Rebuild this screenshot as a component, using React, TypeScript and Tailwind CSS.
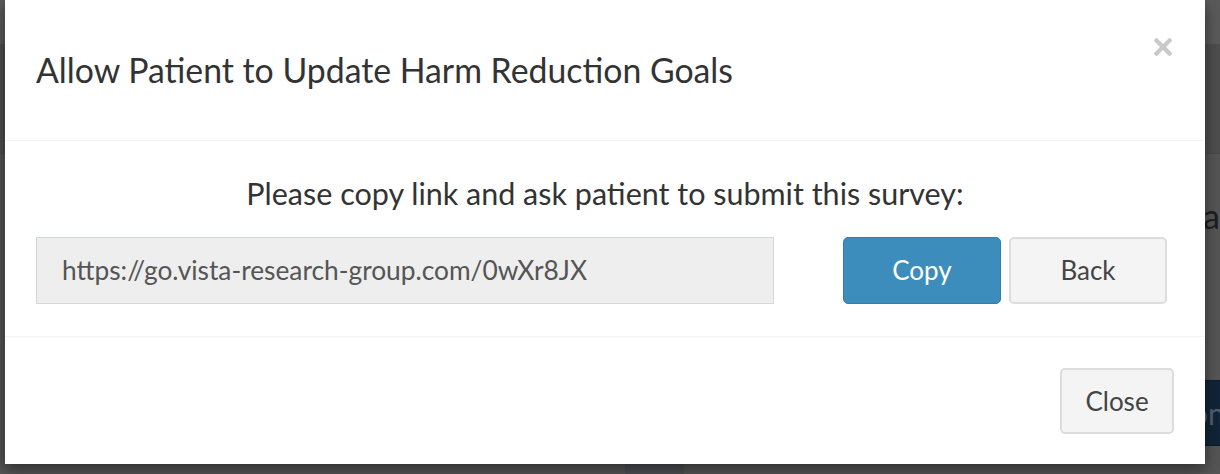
import React from "react";

export default function App() {
  const font = { fontFamily: "Lato, 'Open Sans', sans-serif" };
  return (
    <div
      className="relative w-[1220px] h-[474px] overflow-hidden bg-[#565656]"
      style={font}
    >
      {/* dimmed page behind the modal */}
      <div className="absolute left-0 top-0 w-[1220px] h-[44px] bg-[#5b5b5b]" />
      <div className="absolute left-0 top-[44px] w-[1220px] h-[109px] bg-[#4f4f4f]" />
      <div className="absolute left-0 top-[153px] w-[1220px] h-[1px] bg-[#4a4a4a]" />
      <div className="absolute left-[1203px] top-[196px] text-[34px] leading-[40px] text-[#1e1e1e]">
        ar
      </div>
      <div className="absolute left-[-14px] top-[276px] text-[34px] leading-[40px] text-[#1e1e1e]">
        r
      </div>
      <div className="absolute left-[1150px] top-[380px] w-[120px] h-[66px] bg-[#112538] border border-[#0b1a28] flex items-center pl-[40px] text-[30px] text-[#556070]">
        on
      </div>
      <div className="absolute left-[625px] top-[464px] w-[59px] h-[10px] bg-[#4d4f52]" />

      {/* modal */}
      <div className="absolute left-[5px] top-0 w-[1200px] h-[464px] bg-white flex flex-col shadow-[0_5px_15px_rgba(0,0,0,0.5)]">
        <div className="h-[141px] border-b border-[#f4f4f4] pl-[31px] pr-[33px] pt-[38px] flex justify-between items-start">
          <h4 className="mt-[11px] text-[33.8px] leading-[43px] text-[#333]">
            Allow Patient to Update Harm Reduction Goals
          </h4>
          <svg width="18" height="18" viewBox="0 0 18 18">
            <path
              d="M2.5 2.5 L15.5 15.5 M15.5 2.5 L2.5 15.5"
              stroke="#c9c9c9"
              strokeWidth="4.2"
              strokeLinecap="square"
            />
          </svg>
        </div>
        <div className="h-[196px] border-b border-[#f4f4f4] pt-[31px]">
          <p className="text-center text-[30.5px] leading-[43px] text-[#333] mb-[22px]">
            Please copy link and ask patient to submit this survey:
          </p>
          <div className="flex pl-[31px]">
            <div className="w-[738px] h-[67px] bg-[#eeeeee] border border-[#d2d6de] flex items-center pl-[25px] text-[26.3px] text-[#555]">
              https://go.vista-research-group.com/0wXr8JX
            </div>
            <button className="ml-[69px] w-[158px] h-[67px] rounded-[5px] bg-[#3c8dbc] border border-[#367fa9] text-white text-[26px]">
              Copy
            </button>
            <button className="ml-[8px] w-[158px] h-[67px] rounded-[5px] bg-[#f4f4f4] border-2 border-[#dddddd] text-[#444] text-[26px]">
              Back
            </button>
          </div>
        </div>
        <div className="flex-1 flex justify-end items-start pt-[31px] pr-[31px]">
          <button className="w-[114px] h-[66px] rounded-[5px] bg-[#f4f4f4] border-2 border-[#dddddd] text-[#444] text-[26px]">
            Close
          </button>
        </div>
      </div>
    </div>
  );
}
